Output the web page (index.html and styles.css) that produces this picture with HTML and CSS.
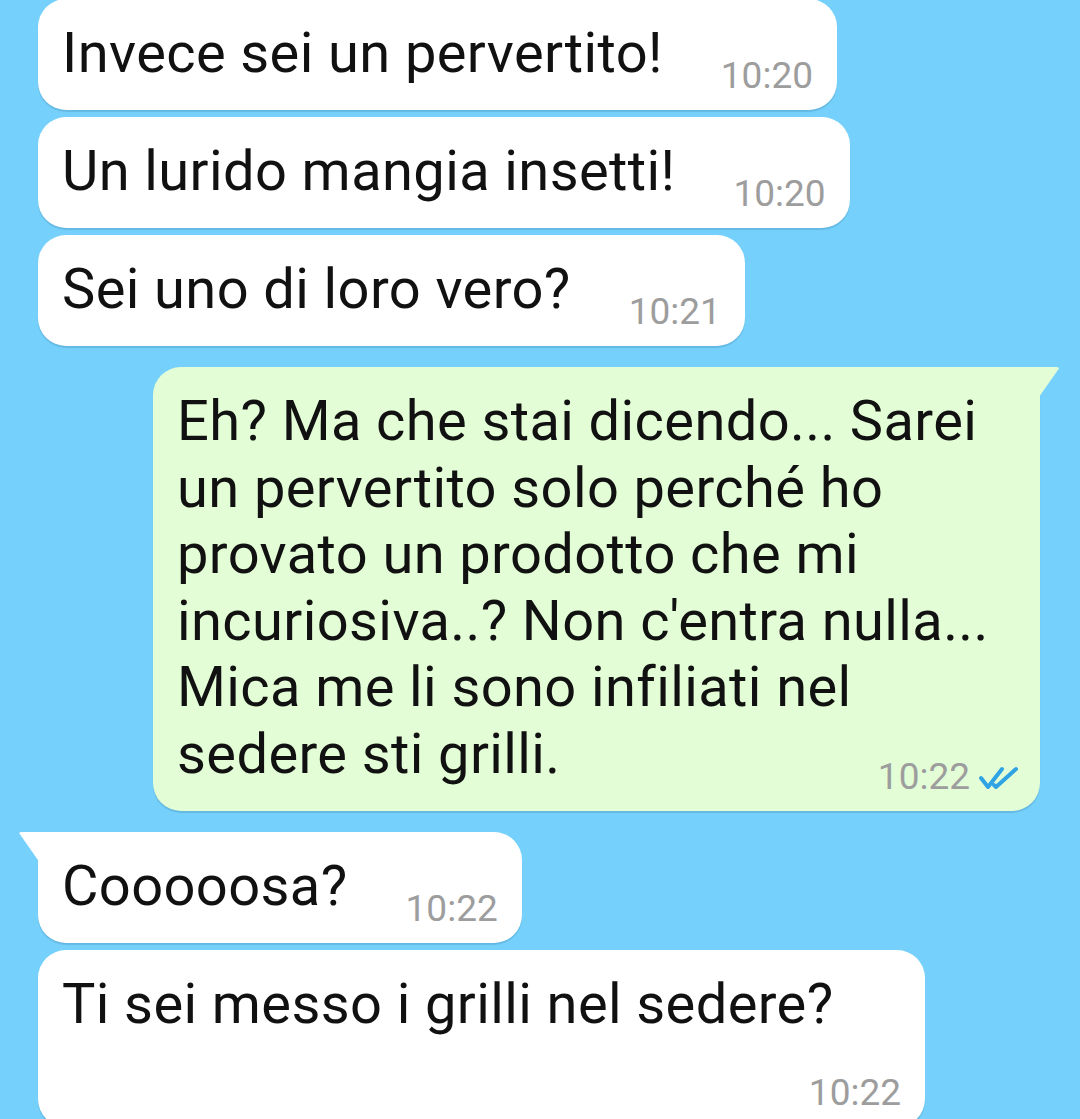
FILE: index.html
```html
<!DOCTYPE html>
<html lang="it">
<head>
  <meta charset="UTF-8" />
  <meta name="viewport" content="width=device-width, initial-scale=1" />
  <title>Chat</title>
  <link rel="stylesheet" href="styles.css">
</head>
<body>
  <div class="chat">
    <div class="group">
      <div class="bubble">Invece sei un pervertito!<span class="time">10:20</span></div>
      <div class="bubble">Un lurido mangia insetti!<span class="time">10:20</span></div>
      <div class="bubble">Sei uno di loro vero?<span class="time">10:21</span></div>
    </div>

    <div class="group out">
      <div class="bubble tail">Eh? Ma che stai dicendo... Sarei un pervertito solo perché ho provato un prodotto che mi incuriosiva..? Non c'entra nulla... Mica me li sono infiliati nel sedere sti grilli.<span class="time">10:22<svg class="ticks" width="42" height="26" viewBox="0 0 42 26" fill="none" stroke="currentColor" stroke-width="4" stroke-linecap="round" stroke-linejoin="round"><path d="M3 13 L10 22 L24 4"></path><path d="M16 20 L18 22 L38 4"></path></svg></span></div>
    </div>

    <div class="group">
      <div class="bubble tail">Cooooosa?<span class="time">10:22</span></div>
      <div class="bubble">Ti sei messo i grilli nel sedere?<span class="time">10:22</span></div>
    </div>
  </div>
</body>
</html>
```

FILE: styles.css
```css
html,
body {
  margin: 0;
  height: 100%;
  overflow: hidden;
  background: #75d1fb;
}
body {
  font-family: Roboto, 'Noto Sans', sans-serif;
}
.chat {
  display: flex;
  flex-direction: column;
  gap: 21px;
  padding: 0 40px 0 38px;
  margin-top: -1px;
}
.group {
  display: flex;
  flex-direction: column;
  align-items: flex-start;
  gap: 7px;
}
.group.out {
  align-items: flex-end;
}
.bubble {
  position: relative;
  max-width: 887px;
  box-sizing: border-box;
  padding: 21px 24px 13px;
  background: #fff;
  border-radius: 28px;
  box-shadow: 0 2px 1px rgba(0, 40, 80, 0.14);
  color: #111;
  font-size: 56px;
  line-height: 66.5px;
  letter-spacing: 0.4px;
}
.out .bubble {
  background: #e3fdd6;
  padding-right: 20px;
}
.time {
  float: right;
  margin: 34px 0 0 58px;
  color: #9d9d9d;
  font-size: 37px;
  line-height: normal;
  letter-spacing: 0;
}
.ticks {
  margin-left: 8px;
  color: #2fa3e3;
  vertical-align: -2px;
}

/* little corner tail on the first bubble of a group */
.bubble.tail::before {
  content: "";
  position: absolute;
  top: 0;
  width: 21px;
  height: 30px;
  background: inherit;
}
.group:not(.out) .bubble.tail {
  border-top-left-radius: 0;
}
.group:not(.out) .bubble.tail::before {
  left: -20px;
  clip-path: polygon(0 0, 100% 0, 100% 100%);
  border-top-left-radius: 4px;
}
.out .bubble.tail {
  border-top-right-radius: 0;
}
.out .bubble.tail::before {
  right: -20px;
  clip-path: polygon(0 0, 100% 0, 0 100%);
  border-top-right-radius: 4px;
}
```
